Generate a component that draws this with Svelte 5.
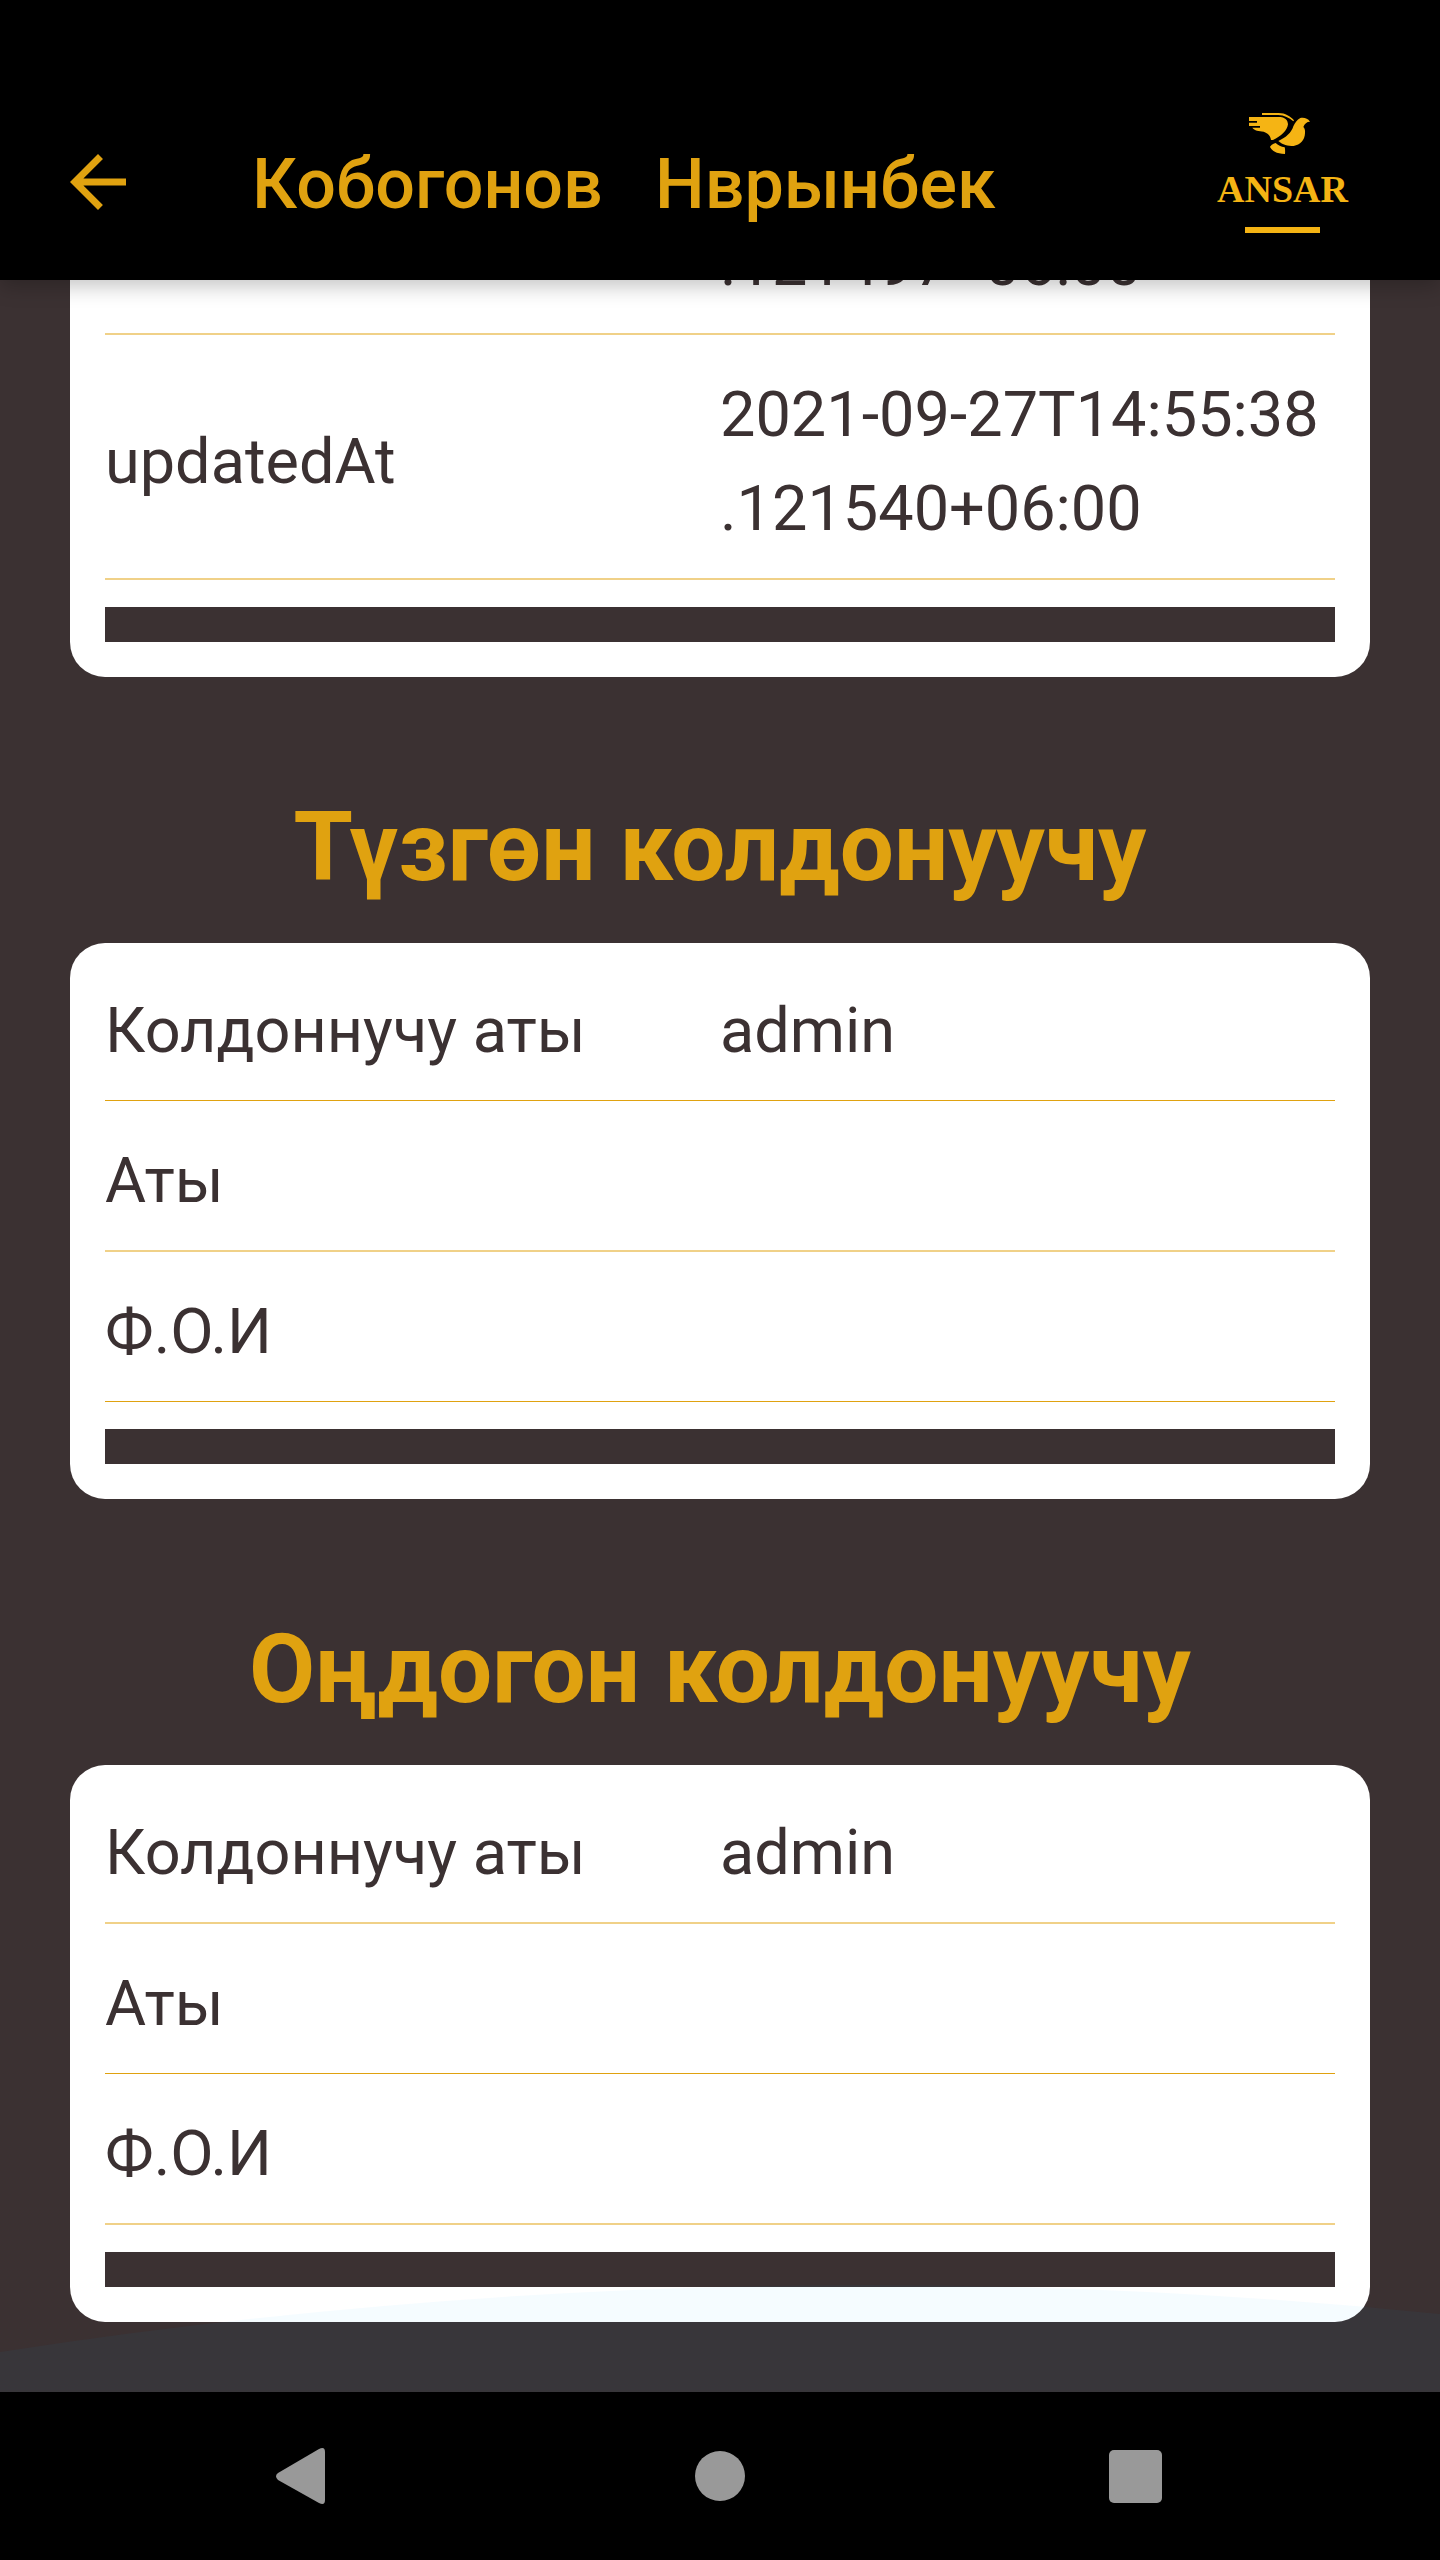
<script>
  const sections = [
    {
      title: '',
      rows: [
        { label: '', value: '.121497+06:00', soft: true },
        { label: 'updatedAt', value: '2021-09-27T14:55:38\n.121540+06:00', soft: true }
      ]
    },
    {
      title: 'Түзгөн колдонуучу',
      rows: [
        { label: 'Колдоннучу аты', value: 'admin', soft: false },
        { label: 'Аты', value: '', soft: true },
        { label: 'Ф.О.И', value: '', soft: false }
      ]
    },
    {
      title: 'Оңдогон колдонуучу',
      rows: [
        { label: 'Колдоннучу аты', value: 'admin', soft: true },
        { label: 'Аты', value: '', soft: false },
        { label: 'Ф.О.И', value: '', soft: true }
      ]
    }
  ];
</script>

<div class="screen">
  <header>
    <button class="back" aria-label="Back">
      <svg viewBox="0 0 24 24" width="84" height="84">
        <path d="M20 11H7.83l5.59-5.59L12 4l-8 8 8 8 1.41-1.41L7.83 13H20v-2z" />
      </svg>
    </button>
    <h1>Кобогонов   Нврынбек</h1>
    <div class="logo">
      <svg class="bird" viewBox="171 51 186 129" width="62" height="43" aria-hidden="true">
        <path d="M213 54H263C283 54 298 64 309 76L307 79C294 68 280 61 262 60H213Z" />
        <path d="M174 66H268C282 67 291 76 291 88C289 106 270 124 246 135H240C238 122 232 116 218 110C204 108 190 107 184 98H207V93H174V83H198V78H174Z" />
        <path d="M357 80C350 70 340 67 328 69C318 74 312 84 307 94C302 112 285 128 262 138C275 150 290 153 308 153C328 150 341 135 342 115C343 105 341 100 337 96C341 86 347 80 357 80Z" />
        <path d="M254 144C245 147 238 152 237 156C242 166 256 177 282 177C283 168 282 160 281 157C270 155 261 150 254 144Z" />
      </svg>
      <span class="brand">ANSAR</span>
      <span class="rule"></span>
    </div>
  </header>

  <main>
    {#each sections as section}
      <section>
        {#if section.title}
          <h2>{section.title}</h2>
        {/if}
        <div class="card">
          <table>
            <tbody>
              {#each section.rows as row}
                <tr class:soft={row.soft}>
                  <th scope="row">{row.label}</th>
                  <td>{row.value}</td>
                </tr>
              {/each}
            </tbody>
          </table>
          <div class="bar"></div>
        </div>
      </section>
    {/each}
    <svg class="wave" viewBox="0 0 1440 110" preserveAspectRatio="none" aria-hidden="true">
      <path d="M0 70Q720 -41 1440 32V110H0Z" />
    </svg>
  </main>

  <nav>
    <button aria-label="Back">
      <svg viewBox="0 0 84 84" width="84" height="84">
        <path d="M15 39L56 15Q62 12 62 18V66Q62 72 56 69L15 46Q11 42 15 39Z" />
      </svg>
    </button>
    <button aria-label="Home">
      <svg viewBox="0 0 84 84" width="84" height="84"><circle cx="42" cy="42" r="25" /></svg>
    </button>
    <button aria-label="Recent apps">
      <svg viewBox="0 0 84 84" width="84" height="84"><rect x="16" y="16" width="53" height="53" rx="5" /></svg>
    </button>
  </nav>
</div>

<style>
  :global(body) {
    background: #3b3132;
  }

  .screen {
    display: flex;
    flex-direction: column;
    height: 100vh;
    background: #3b3132;
    color: #3b3132;
    font-family: Roboto, 'Noto Sans', sans-serif;
  }

  button {
    display: block;
    padding: 0;
    border: 0;
    background: none;
    color: inherit;
    cursor: pointer;
  }

  svg {
    display: block;
    fill: currentColor;
  }

  header {
    position: relative;
    z-index: 2;
    display: flex;
    align-items: center;
    flex: none;
    height: 196px;
    padding: 84px 92px 0 56px;
    background: #000;
    color: #e0a210;
    box-shadow: 0 6px 20px rgba(0, 0, 0, 0.24);
  }

  h1 {
    flex: 1;
    margin: 0;
    padding: 4px 0 0 112px;
    font-size: 70px;
    font-weight: 500;
    line-height: 82px;
    white-space: pre;
  }

  .logo {
    display: flex;
    flex-direction: column;
    align-items: center;
    align-self: flex-start;
    padding-top: 28px;
    color: #f5b414;
  }

  .bird {
    margin-right: 8px;
  }

  .brand {
    padding-top: 12px;
    font-family: 'Liberation Serif', serif;
    font-size: 38px;
    font-weight: 700;
    line-height: 44px;
  }

  .rule {
    width: 75px;
    height: 6px;
    margin-top: 16px;
    background: #f5b414;
  }

  main {
    position: relative;
    display: flex;
    flex: 1;
    flex-direction: column;
    justify-content: flex-end;
    min-height: 0;
    padding: 0 70px 70px;
    overflow: hidden;
  }

  section {
    flex: none;
  }

  h2 {
    margin: 97px 0 22px;
    color: #e0a210;
    font-size: 96px;
    font-weight: 700;
    line-height: 147px;
    text-align: center;
  }

  .card {
    padding: 8px 35px 35px;
    border-radius: 35px;
    background: #fff;
  }

  section:first-child .card {
    border-top-left-radius: 0;
    border-top-right-radius: 0;
  }

  table {
    width: 100%;
    border-spacing: 0;
    table-layout: fixed;
  }

  th,
  td {
    padding: 33px 0 22px;
    border-bottom: 1px solid #e0a210;
    font-size: 63px;
    font-weight: 400;
    line-height: 94px;
    text-align: left;
    vertical-align: middle;
    white-space: pre-line;
  }

  .soft th,
  .soft td {
    border-bottom: 2px solid #f0d188;
  }

  .bar {
    height: 35px;
    margin-top: 27px;
    background: #3b3132;
  }

  .wave {
    position: absolute;
    bottom: 0;
    left: 0;
    width: 100%;
    height: 110px;
    color: rgba(3, 169, 244, 0.04);
    pointer-events: none;
  }

  nav {
    display: flex;
    flex: none;
    align-items: center;
    justify-content: space-between;
    height: 168px;
    padding: 0 263px;
    background: #000;
    color: #999;
  }
</style>
